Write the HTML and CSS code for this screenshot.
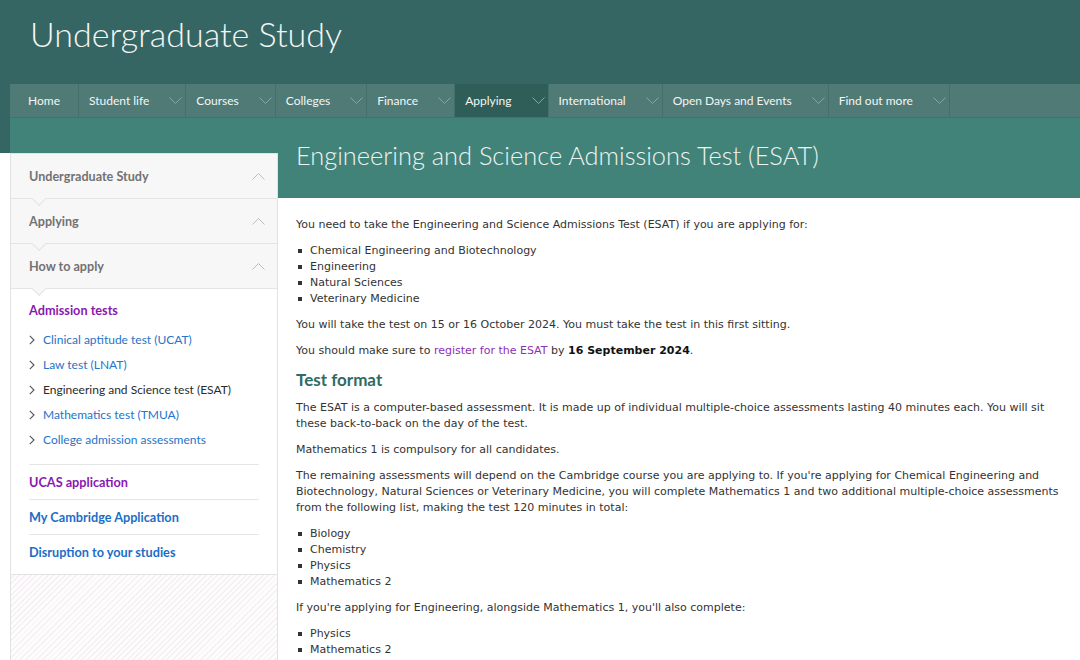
FILE: index.html
```html
<!DOCTYPE html>
<html lang="en">
<head>
<meta charset="utf-8">
<title>Engineering and Science Admissions Test (ESAT) | Undergraduate Study</title>
<link rel="stylesheet" href="styles.css">
</head>
<body>
<div class="page">
  <header class="masthead">
    <div class="site-title">Undergraduate Study</div>
  </header>

  <nav class="mainnav">
    <a class="nav-item nav-home" href="#">Home</a>
    <div class="nav-item"><span class="nav-label">Student life</span><span class="nav-toggle"><svg width="13" height="7" viewBox="0 0 13 7"><polyline points="0.5,0.5 6.5,6.5 12.5,0.5"/></svg></span></div>
    <div class="nav-item"><span class="nav-label">Courses</span><span class="nav-toggle"><svg width="13" height="7" viewBox="0 0 13 7"><polyline points="0.5,0.5 6.5,6.5 12.5,0.5"/></svg></span></div>
    <div class="nav-item"><span class="nav-label">Colleges</span><span class="nav-toggle"><svg width="13" height="7" viewBox="0 0 13 7"><polyline points="0.5,0.5 6.5,6.5 12.5,0.5"/></svg></span></div>
    <div class="nav-item"><span class="nav-label">Finance</span><span class="nav-toggle"><svg width="13" height="7" viewBox="0 0 13 7"><polyline points="0.5,0.5 6.5,6.5 12.5,0.5"/></svg></span></div>
    <div class="nav-item is-active"><span class="nav-label">Applying</span><span class="nav-toggle"><svg width="13" height="7" viewBox="0 0 13 7"><polyline points="0.5,0.5 6.5,6.5 12.5,0.5"/></svg></span></div>
    <div class="nav-item"><span class="nav-label">International</span><span class="nav-toggle"><svg width="13" height="7" viewBox="0 0 13 7"><polyline points="0.5,0.5 6.5,6.5 12.5,0.5"/></svg></span></div>
    <div class="nav-item"><span class="nav-label">Open Days and Events</span><span class="nav-toggle"><svg width="13" height="7" viewBox="0 0 13 7"><polyline points="0.5,0.5 6.5,6.5 12.5,0.5"/></svg></span></div>
    <div class="nav-item"><span class="nav-label">Find out more</span><span class="nav-toggle"><svg width="13" height="7" viewBox="0 0 13 7"><polyline points="0.5,0.5 6.5,6.5 12.5,0.5"/></svg></span></div>
  </nav>

  <div class="band">
    <div class="band-spacer"></div>
    <h1 class="page-title">Engineering and Science Admissions Test (ESAT)</h1>
  </div>

  <div class="body-row">
    <aside class="sidebar">
      <div class="sb-box">
        <div class="sb-crumb"><span>Undergraduate Study</span><svg width="13" height="7" viewBox="0 0 13 7"><polyline points="0.5,6.5 6.5,0.5 12.5,6.5"/></svg></div>
        <div class="sb-crumb"><span>Applying</span><svg width="13" height="7" viewBox="0 0 13 7"><polyline points="0.5,6.5 6.5,0.5 12.5,6.5"/></svg></div>
        <div class="sb-crumb"><span>How to apply</span><svg width="13" height="7" viewBox="0 0 13 7"><polyline points="0.5,6.5 6.5,0.5 12.5,6.5"/></svg></div>
        <div class="sb-menu">
          <div class="sb-current">Admission tests</div>
          <ul class="sb-sub">
            <li><svg width="6" height="10" viewBox="0 0 6 10"><polyline points="0.8,0.8 5,5 0.8,9.2"/></svg><a href="#">Clinical aptitude test (UCAT)</a></li>
            <li><svg width="6" height="10" viewBox="0 0 6 10"><polyline points="0.8,0.8 5,5 0.8,9.2"/></svg><a href="#">Law test (LNAT)</a></li>
            <li class="is-here"><svg width="6" height="10" viewBox="0 0 6 10"><polyline points="0.8,0.8 5,5 0.8,9.2"/></svg><span>Engineering and Science test (ESAT)</span></li>
            <li><svg width="6" height="10" viewBox="0 0 6 10"><polyline points="0.8,0.8 5,5 0.8,9.2"/></svg><a href="#">Mathematics test (TMUA)</a></li>
            <li><svg width="6" height="10" viewBox="0 0 6 10"><polyline points="0.8,0.8 5,5 0.8,9.2"/></svg><a href="#">College admission assessments</a></li>
          </ul>
          <a class="sb-link is-visited" href="#">UCAS application</a>
          <a class="sb-link" href="#">My Cambridge Application</a>
          <a class="sb-link" href="#">Disruption to your studies</a>
        </div>
      </div>
    </aside>

    <main class="content">
      <p>You need to take the Engineering and Science Admissions Test (ESAT) if you are applying for:</p>
      <ul class="bullets">
        <li>Chemical Engineering and Biotechnology</li>
        <li>Engineering</li>
        <li>Natural Sciences</li>
        <li>Veterinary Medicine</li>
      </ul>
      <p>You will take the test on 15 or 16 October 2024. You must take the test in this first sitting.</p>
      <p>You should make sure to <a href="#">register for the ESAT</a> by <strong>16 September 2024</strong>.</p>
      <h2>Test format</h2>
      <p>The ESAT is a computer-based assessment. It is made up of individual multiple-choice assessments lasting 40 minutes each. You will sit these back-to-back on the day of the test.</p>
      <p>Mathematics 1 is compulsory for all candidates.</p>
      <p>The remaining assessments will depend on the Cambridge course you are applying to. If you're applying for Chemical Engineering and Biotechnology, Natural Sciences or Veterinary Medicine, you will complete Mathematics 1 and two additional multiple-choice assessments from the following list, making the test 120 minutes in total:</p>
      <ul class="bullets">
        <li>Biology</li>
        <li>Chemistry</li>
        <li>Physics</li>
        <li>Mathematics 2</li>
      </ul>
      <p>If you're applying for Engineering, alongside Mathematics 1, you'll also complete:</p>
      <ul class="bullets last">
        <li>Physics</li>
        <li>Mathematics 2</li>
      </ul>
    </main>
  </div>
</div>
</body>
</html>
```

FILE: styles.css
```css
* { box-sizing: border-box; }

html, body {
  margin: 0;
  padding: 0;
  background: #ffffff;
}

body {
  font-family: "DejaVu Sans", Verdana, sans-serif;
  color: #333333;
  overflow: hidden;
}

.page {
  background: linear-gradient(#366664, #366664) no-repeat 0 0 / 100% 153px;
  height: 660px;
  overflow: hidden;
}

/* ---------- masthead ---------- */
.masthead {
  height: 84px;
  padding: 14px 0 0 30px;
}

.site-title {
  font-family: Lato, "Open Sans", sans-serif;
  font-weight: 300;
  font-size: 34px;
  line-height: 40px;
  color: #f4f6f6;
}

/* ---------- main navigation ---------- */
.mainnav {
  margin-left: 10px;
  height: 34px;
  display: flex;
  background: #507a76;
  border-bottom: 1px solid #45706b;
}

.nav-item {
  display: flex;
  align-items: center;
  height: 100%;
  padding-left: 10px;
  border-right: 1px solid #43706b;
  font-family: Lato, "Open Sans", sans-serif;
  font-size: 12px;
  color: #f3f6f5;
  text-decoration: none;
  white-space: nowrap;
}

.nav-home {
  padding: 0 18px;
}

.nav-item.is-active {
  background: #2f5d57;
}

.nav-toggle {
  display: flex;
  align-items: center;
  padding: 0 3px 0 20px;
}

.nav-toggle svg polyline {
  fill: none;
  stroke: #86a8a3;
  stroke-width: 1;
}

/* ---------- green band ---------- */
.band {
  margin-left: 10px;
  height: 80px;
  background: #418379;
  display: grid;
  grid-template-columns: 268px 1fr;
  column-gap: 18px;
}

.page-title {
  margin: 0;
  padding-top: 21px;
  font-family: Lato, "Open Sans", sans-serif;
  font-weight: 300;
  font-size: 25.4px;
  line-height: 32px;
  color: #eef4f2;
}

/* ---------- body row ---------- */
.body-row {
  margin-left: 10px;
  display: grid;
  grid-template-columns: 268px 1fr;
  column-gap: 18px;
  align-items: stretch;
}

/* ---------- sidebar ---------- */
.sidebar {
  margin-top: -45px;
  border-left: 1px solid #e2e2e2;
  border-right: 1px solid #e2e2e2;
  background: repeating-linear-gradient(135deg, #f6f0f5 0 1.3px, #fefdfe 1.3px 4px);
  min-height: 520px;
}

.sb-box {
  background: #ffffff;
  border-top: 1px solid #e2e2e2;
  border-bottom: 1px solid #e2e2e2;
}

.sb-crumb {
  position: relative;
  height: 45px;
  display: flex;
  align-items: center;
  justify-content: space-between;
  padding: 0 12px 0 18px;
  background: #f7f7f7;
  border-bottom: 1px solid #e4e4e4;
  font-family: Lato, "Open Sans", sans-serif;
  font-weight: 700;
  font-size: 12.6px;
  color: #727272;
}

.sb-crumb::after {
  content: "";
  position: absolute;
  left: 23px;
  bottom: -6px;
  width: 9px;
  height: 9px;
  background: #f7f7f7;
  border-right: 1px solid #e4e4e4;
  border-bottom: 1px solid #e4e4e4;
  transform: rotate(45deg);
  z-index: 2;
}

.sb-crumb svg polyline {
  fill: none;
  stroke: #bcbcbc;
  stroke-width: 1;
}

.sb-menu {
  padding: 12px 18px 5px 18px;
  font-family: Lato, "Open Sans", sans-serif;
  font-size: 12px;
}

.sb-current {
  font-weight: 700;
  font-size: 12.7px;
  line-height: 18px;
  color: #8a17b1;
}

.sb-sub {
  list-style: none;
  margin: 8px 0 12px;
  padding: 0;
}

.sb-sub li {
  display: flex;
  align-items: center;
  gap: 8px;
  height: 25px;
}

.sb-sub li svg polyline {
  fill: none;
  stroke: #555555;
  stroke-width: 1.1;
}

.sb-sub a {
  color: #2673c8;
  text-decoration: none;
}

.sb-sub .is-here span {
  color: #2b2b2b;
}

.sb-link {
  display: flex;
  align-items: center;
  height: 35px;
  border-top: 1px solid #e6e6e6;
  font-weight: 700;
  font-size: 12.7px;
  color: #1d6dc6;
  text-decoration: none;
}

.sb-link.is-visited {
  color: #8a17b1;
}

/* ---------- content ---------- */
.content {
  padding: 19px 14px 0 0;
  font-size: 11px;
  line-height: 16px;
  color: #333333;
}

.content p {
  margin: 0 0 10px;
}

.content a {
  color: #8e2fb8;
  text-decoration: none;
}

.content strong {
  color: #111111;
}

.content h2 {
  margin: 0 0 10px;
  padding-top: 1px;
  font-family: Lato, "Open Sans", sans-serif;
  font-weight: 700;
  font-size: 17px;
  line-height: 20px;
  color: #2f6b64;
}

.bullets {
  list-style: none;
  margin: 0 0 10px;
  padding: 0;
}

.bullets.last {
  margin-bottom: 0;
}

.bullets li {
  display: flex;
  align-items: center;
}

.bullets li::before {
  content: "";
  flex: none;
  width: 4px;
  height: 4px;
  margin: 0 8px 0 2px;
  background: #333333;
}
```
